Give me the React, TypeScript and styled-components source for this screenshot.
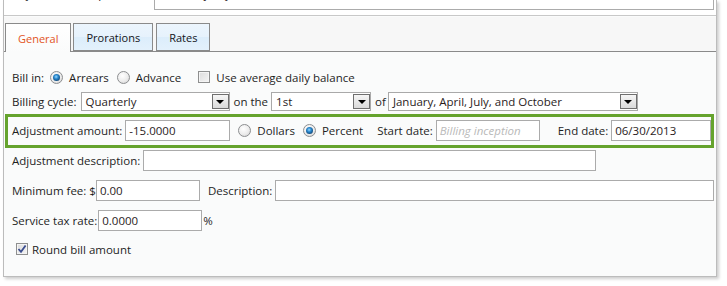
import React from 'react';
import styled, { createGlobalStyle } from 'styled-components';

const Global = createGlobalStyle`
  html, body { margin: 0; padding: 0; background: #ffffff; }
  body {
    font-family: "Open Sans", "Noto Sans", sans-serif;
    font-size: 11.5px;
    color: #1e1e1e;
  }
  #root { width: 727px; height: 286px; overflow: hidden; }
`;

const Frame = styled.div`
  margin-left: 3px;
  width: 714px;
  height: 277px;
  box-sizing: border-box;
  border: 1px solid #bcbcbc;
  border-top: none;
  background: #fafbfb;
  box-shadow: 2px 2px 3px rgba(0, 0, 0, 0.2);
  display: flex;
  flex-direction: column;
  overflow: hidden;
`;

const TopStrip = styled.div`
  height: 16px;
  flex: 0 0 auto;
  box-sizing: border-box;
  background: #ffffff;
  border-bottom: 1px solid #c8c8c8;
  padding: 0 2px 0 8px;
  overflow: hidden;
`;

const TopRow = styled.div`
  display: flex;
  align-items: flex-start;
  height: 25px;
  margin-top: -15px;
  white-space: nowrap;
`;

const TopLabel = styled.span`
  line-height: 16px;
  margin-top: 1px;
`;

const TopInput = styled.div`
  flex: 1 1 auto;
  box-sizing: border-box;
  height: 25px;
  margin-left: 26px;
  border: 1px solid #ababab;
  border-top: none;
  background: #ffffff;
  padding: 1px 3px 0;
  line-height: 16px;
  color: #2a1c1c;
`;

const TabBar = styled.div`
  margin-top: 1px;
  height: 35px;
  flex: 0 0 auto;
  box-sizing: border-box;
  background: #f7f7f7;
  border-bottom: 1px solid #8a8a8a;
  display: flex;
  align-items: flex-end;
  padding-left: 1px;
  gap: 2px;
`;

const Tab = styled.div<{ $active?: boolean }>`
  height: ${p => (p.$active ? 29 : 28)}px;
  margin-bottom: ${p => (p.$active ? -1 : 0)}px;
  margin-right: ${p => (p.$active ? 0 : 1)}px;
  box-sizing: border-box;
  border: 1px solid #8a8a8a;
  border-bottom: ${p => (p.$active ? 'none' : '1px solid #8a8a8a')};
  padding: 0 12px;
  display: flex;
  align-items: center;
  font-size: 11px;
  color: ${p => (p.$active ? '#e2541e' : '#141420')};
  background: ${p =>
    p.$active
      ? 'linear-gradient(#ffffff, #fafbfb)'
      : 'linear-gradient(#ecf5fd 0%, #e6f2fc 50%, #dcedfb 51%, #e3f1fc 100%)'};
`;

const Body = styled.div`
  display: flex;
  flex-direction: column;
  padding: 15px 2px 0 1px;
`;

const Row = styled.div<{ $h: number; $mt?: number }>`
  display: flex;
  align-items: center;
  height: ${p => p.$h}px;
  margin-top: ${p => p.$mt ?? 0}px;
  padding-left: 7px;
  white-space: nowrap;
`;

const Highlight = styled.div`
  margin-top: 3px;
  height: 34px;
  box-sizing: border-box;
  border: 3px solid #65a32d;
  display: flex;
  align-items: center;
  padding: 0 0 1px 4px;
  white-space: nowrap;
`;

const Text = styled.span<{ $ml?: number }>`
  margin-left: ${p => p.$ml ?? 0}px;
`;

const Input = styled.div<{ $w?: number; $ml?: number; $grow?: boolean; $ph?: boolean }>`
  box-sizing: border-box;
  height: 21px;
  width: ${p => (p.$w ? `${p.$w}px` : 'auto')};
  flex: ${p => (p.$grow ? '1 1 auto' : '0 0 auto')};
  margin-left: ${p => p.$ml ?? 0}px;
  border: 1px solid #ababab;
  background: #ffffff;
  padding: 0 3px;
  display: flex;
  align-items: center;
  color: ${p => (p.$ph ? '#b9b9b9' : '#2a1c1c')};
  font-style: ${p => (p.$ph ? 'italic' : 'normal')};
  overflow: hidden;
`;

const Select = styled.div<{ $w: number; $ml?: number }>`
  box-sizing: border-box;
  height: 19px;
  width: ${p => p.$w}px;
  margin-left: ${p => p.$ml ?? 0}px;
  border: 1px solid #a9a9a9;
  background: #ffffff;
  display: flex;
  align-items: center;
  padding-left: 4px;
  color: #2a1c1c;
`;

const SelectText = styled.span`
  flex: 1;
`;

const DropButton = styled.span`
  box-sizing: border-box;
  width: 17px;
  height: 15px;
  border: 1px solid #6f6f6f;
  background: linear-gradient(#f6f6f6, #dadada);
  display: flex;
  align-items: center;
  justify-content: center;
  &::after {
    content: '';
    border-left: 4px solid transparent;
    border-right: 4px solid transparent;
    border-top: 4px solid #000000;
    margin-top: 1px;
  }
`;

const Radio = styled.span<{ $checked?: boolean; $ml?: number }>`
  box-sizing: border-box;
  width: 13px;
  height: 13px;
  margin-left: ${p => p.$ml ?? 0}px;
  border-radius: 50%;
  border: 1px solid #8c8e90;
  background: radial-gradient(circle at 40% 35%, #ffffff 0%, #ececec 55%, #cdcdcd 100%);
  display: inline-flex;
  align-items: center;
  justify-content: center;
  flex: 0 0 auto;
  &::after {
    content: '';
    display: ${p => (p.$checked ? 'block' : 'none')};
    width: 7px;
    height: 7px;
    border-radius: 50%;
    background: radial-gradient(circle at 45% 40%, #9ad8ff 0%, #2a8ad0 35%, #0d3f6e 80%);
  }
`;

const CheckBox = styled.span<{ $ml?: number }>`
  box-sizing: border-box;
  width: 12px;
  height: 12px;
  margin-left: ${p => p.$ml ?? 0}px;
  border: 1px solid #8e8f8f;
  background: linear-gradient(135deg, #dcdcdc, #f4f4f4);
  box-shadow: inset 0 0 0 1px #f4f4f4;
  display: inline-flex;
  align-items: center;
  justify-content: center;
  flex: 0 0 auto;
`;

const Check = () => (
  <svg width="10" height="10" viewBox="0 0 10 10">
    <path d="M1.5 5 L4 7.8 L8.6 1.5" fill="none" stroke="#3a4d8f" strokeWidth="1.8" />
  </svg>
);

export default function App() {
  return (
    <>
      <Global />
      <Frame>
        <TopStrip>
          <TopRow>
            <TopLabel>Adjustment template:</TopLabel>
            <TopInput>Quarterly adjustment</TopInput>
          </TopRow>
        </TopStrip>
        <TabBar>
          <Tab $active>General</Tab>
          <Tab>Prorations</Tab>
          <Tab>Rates</Tab>
        </TabBar>
        <Body>
          <Row $h={20}>
            <Text>Bill in:</Text>
            <Radio $checked $ml={6} />
            <Text $ml={6}>Arrears</Text>
            <Radio $ml={8} />
            <Text $ml={6}>Advance</Text>
            <CheckBox $ml={17} />
            <Text $ml={6}>Use average daily balance</Text>
          </Row>
          <Row $h={19} $mt={5}>
            <Text>Billing cycle:</Text>
            <Select $w={149} $ml={4}>
              <SelectText>Quarterly</SelectText>
              <DropButton />
            </Select>
            <Text $ml={4}>on the</Text>
            <Select $w={100} $ml={3}>
              <SelectText>1st</SelectText>
              <DropButton />
            </Select>
            <Text $ml={4}>of</Text>
            <Select $w={250} $ml={2}>
              <SelectText>January, April, July, and October</SelectText>
              <DropButton />
            </Select>
          </Row>
          <Highlight>
            <Text>Adjustment amount:</Text>
            <Input $w={105} $ml={3}>-15.0000</Input>
            <Radio $ml={8} />
            <Text $ml={6}>Dollars</Text>
            <Radio $checked $ml={8} />
            <Text $ml={6}>Percent</Text>
            <Text $ml={14}>Start date:</Text>
            <Input $w={104} $ml={3} $ph>Billing inception</Input>
            <Text $ml={18}>End date:</Text>
            <Input $ml={3} $grow>06/30/2013</Input>
          </Highlight>
          <Row $h={21} $mt={2}>
            <Text>Adjustment description:</Text>
            <Input $w={453} $ml={3} />
          </Row>
          <Row $h={21} $mt={9}>
            <Text>Minimum fee: $</Text>
            <Input $w={104} $ml={0}>0.00</Input>
            <Text $ml={8}>Description:</Text>
            <Input $ml={3} $grow />
          </Row>
          <Row $h={21} $mt={9}>
            <Text>Service tax rate:</Text>
            <Input $w={104} $ml={1}>0.0000</Input>
            <Text $ml={1}>%</Text>
          </Row>
          <Row $h={20} $mt={8}>
            <CheckBox $ml={4}>
              <Check />
            </CheckBox>
            <Text $ml={4}>Round bill amount</Text>
          </Row>
        </Body>
      </Frame>
    </>
  );
}
